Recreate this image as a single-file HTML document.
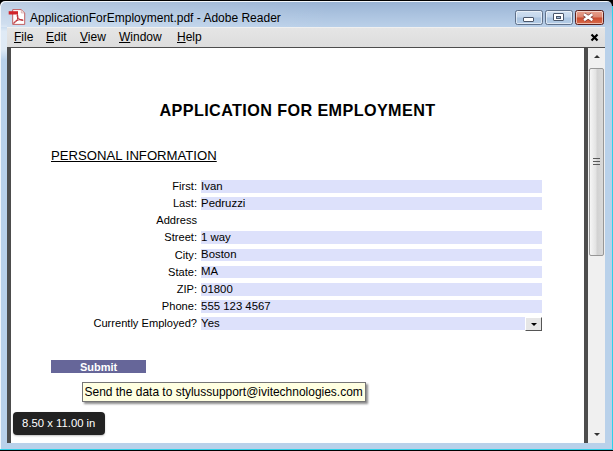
<!DOCTYPE html>
<html><head><meta charset="utf-8">
<style>
html,body{margin:0;padding:0;}
body{width:613px;height:451px;position:relative;overflow:hidden;background:#000;font-family:"Liberation Sans",sans-serif;}
.abs{position:absolute;}
#frame{left:0;top:1.3px;width:612px;height:447.7px;border-radius:5px 5px 0 0;background:linear-gradient(90deg,rgba(255,255,255,0.35) 0px,rgba(255,255,255,0.25) 60px,rgba(255,255,255,0) 330px) 0 0/612px 26px no-repeat,linear-gradient(#98b2d3 0px,#a9c1de 12px,#b9cfe8 25px,#b9d1ea 27px);box-shadow:inset 1px 1px 0 #f2f6fb;}
#cy1{left:612px;top:6px;width:1px;height:444px;background:#2fd0e8;}
#cy2{left:0;top:449px;width:613px;height:1px;background:#2fd0e8;}
#title{left:30px;top:11px;font-size:12px;line-height:14px;color:#000;white-space:nowrap;}
#menubar{left:7px;top:27px;width:598px;height:20px;background:linear-gradient(#e5e5e5,#dddddd);border-top:1px solid #f0f0f0;box-sizing:border-box;}
.mi{position:absolute;top:30px;font-size:12px;line-height:14px;color:#000;}
#content{left:7px;top:47px;width:598px;height:396px;background:#4d4d4d;}
#page{left:11px;top:48px;width:573px;height:395px;background:#fff;}
#sb{left:588px;top:48px;width:17px;height:395px;background:#f0f0f0;}
#thumb{left:588.800px;top:68.300px;width:15.200px;height:187.400px;border:1px solid #979797;border-radius:2px;box-sizing:border-box;background:linear-gradient(90deg,#f6f6f6,#e3e3e3 45%,#d2d2d2 55%,#dadada);}
.grip{position:absolute;left:592.800px;width:6.800px;height:1.200px;background:#5a5a5a;}
h1{position:absolute;left:159.5px;white-space:nowrap;top:101px;margin:0;font-size:16.2px;letter-spacing:0.39px;font-weight:bold;color:#000;}
#pi{left:51px;top:147.6px;font-size:13.15px;text-decoration:underline;color:#000;}
.lab{position:absolute;right:416px;font-size:11.1px;color:#000;white-space:nowrap;}
.fld{position:absolute;left:200.6px;width:341.4px;height:12.7px;background:#dde1fb;}
.val{position:absolute;left:201.1px;font-size:11.38px;margin-top:-0.3px;color:#000;white-space:nowrap;}
#dd{left:525px;top:317px;width:17px;height:13.5px;box-sizing:border-box;background:#e6e6e6;border-top:1px solid #fff;border-left:1px solid #fff;border-right:1px solid #555;border-bottom:1px solid #555;}
#dda{left:531px;top:323px;width:0;height:0;border-left:3px solid transparent;border-right:3px solid transparent;border-top:3px solid #000;}
#submit{left:51.3px;top:359.8px;width:94.5px;height:13.3px;background:#666699;color:#fff;font-size:11px;font-weight:bold;text-align:center;line-height:15px;}
#tip{left:82px;top:382.2px;width:283.6px;height:20px;box-sizing:border-box;border:1px solid #767676;background:#ffffe1;font-size:11.97px;line-height:19.6px;padding-left:1.5px;color:#000;white-space:nowrap;box-shadow:2px 2px 2px rgba(0,0,0,0.45);}
#size{left:12.5px;top:412px;width:92.5px;height:22.5px;border-radius:4px;background:#222;color:#fff;font-size:11.3px;line-height:23.5px;text-align:center;box-shadow:0 1px 2px rgba(0,0,0,0.25);}
.wb{position:absolute;top:10px;height:15px;box-sizing:border-box;border:1px solid #5f7089;border-radius:2.500px;box-shadow:inset 0 0 0 1px rgba(255,255,255,0.55);}
</style></head><body>
<div id="frame" class="abs"></div>
<div class="abs" style="left:1px;top:24px;width:6px;height:36px;background:linear-gradient(rgba(255,255,255,0),rgba(255,255,255,0.55) 20%,rgba(255,255,255,0.55) 70%,rgba(255,255,255,0))"></div>
<div id="cy1" class="abs"></div>
<div id="cy2" class="abs"></div>
<svg class="abs" style="left:8px;top:8px" width="18" height="18" viewBox="0 0 18 18">
<path d="M4.700 1.600h8.600l3.400 3.400v11.400h-12z" fill="#fff" stroke="#b83a3a" stroke-width="0.800"/>
<path d="M13.300 1.600v3.400h3.400z" fill="#f3e6e6" stroke="#c98080" stroke-width="0.500"/>
<rect x="0.700" y="3.200" width="9.300" height="3.300" fill="#d2232a"/>
<path d="M9.500 6.600c0.800 2.500 0.200 4.300-0.900 6.200c-0.800 1.300-2 2.300-3 2.500c0.400-1.400 2.300-2.700 4.600-3.300c2-0.500 3.700-0.400 5 0.200c-1.600 0.500-4.200-0.800-5.400-2.600c-0.700-1-0.800-2.100-0.300-3z" fill="none" stroke="#b8232a" stroke-width="1"/>
</svg>
<div id="title" class="abs">ApplicationForEmployment.pdf - Adobe Reader</div>
<div class="wb" style="left:515px;width:28px;background:linear-gradient(#cfdff0 0%,#c3d6ec 48%,#aac4e0 52%,#b4cce6 100%)"></div>
<div class="abs" style="left:522.700px;top:17px;width:11.300px;height:4.500px;box-sizing:border-box;background:#fff;border:1px solid #4a566a;border-radius:1px"></div>
<div class="wb" style="left:545px;width:28px;background:linear-gradient(#cfdff0 0%,#c3d6ec 48%,#aac4e0 52%,#b4cce6 100%)"></div>
<div class="abs" style="left:553px;top:13.300px;width:11px;height:8px;box-sizing:border-box;background:#fff;border:1px solid #4a566a;border-radius:1px"></div>
<div class="abs" style="left:556px;top:16px;width:5px;height:3px;box-sizing:border-box;background:#9fb8d6;border:1px solid #4a566a;"></div>
<div class="wb" style="left:575px;width:29px;border-color:#5a1f1c;background:linear-gradient(#e8a08c 0%,#dc8670 48%,#cb4a2d 52%,#d86c4c 100%)"></div>
<svg class="abs" style="left:581.600px;top:12px" width="13" height="11" viewBox="0 0 13 11"><path d="M2 2.300L10.400 8.100M10.400 2.300L2 8.100" stroke="#6a3030" stroke-opacity="0.85" stroke-width="3.900" stroke-linecap="butt"/><path d="M2 2.300L10.400 8.100M10.400 2.300L2 8.100" stroke="#fff" stroke-width="2.500" stroke-linecap="butt"/></svg>
<div id="menubar" class="abs"></div>
<div class="mi" style="left:14px"><u>F</u>ile</div>
<div class="mi" style="left:46px"><u>E</u>dit</div>
<div class="mi" style="left:80px"><u>V</u>iew</div>
<div class="mi" style="left:119px"><u>W</u>indow</div>
<div class="mi" style="left:177px"><u>H</u>elp</div>
<svg class="abs" style="left:590px;top:33px" width="9" height="9" viewBox="0 0 9 9"><path d="M1.500 1.500L7.500 7.500M7.500 1.500L1.500 7.500" stroke="#000" stroke-width="2.200"/></svg>
<div id="content" class="abs"></div>
<div id="page" class="abs"></div>
<div id="sb" class="abs"></div>
<div class="abs" style="left:593.800px;top:55px;width:0;height:0;border-left:3.500px solid transparent;border-right:3.500px solid transparent;border-bottom:3.500px solid #333;"></div>
<div class="abs" style="left:593.500px;top:433px;width:0;height:0;border-left:3.500px solid transparent;border-right:3.500px solid transparent;border-top:3.800px solid #333;"></div>
<div id="thumb" class="abs"></div>
<div class="grip" style="top:158px"></div><div class="grip" style="top:161px"></div><div class="grip" style="top:164px"></div>
<h1>APPLICATION FOR EMPLOYMENT</h1>
<div id="pi" class="abs">PERSONAL INFORMATION</div>
<div class="fld" style="top:180.00px"></div>
<div class="lab" style="top:180.00px">First:</div>
<div class="val" style="top:180.00px">Ivan</div>
<div class="fld" style="top:197.15px"></div>
<div class="lab" style="top:197.15px">Last:</div>
<div class="val" style="top:197.15px">Pedruzzi</div>
<div class="lab" style="top:214.30px">Address</div>
<div class="fld" style="top:231.45px"></div>
<div class="lab" style="top:231.45px">Street:</div>
<div class="val" style="top:231.45px">1 way</div>
<div class="fld" style="top:248.60px"></div>
<div class="lab" style="top:248.60px">City:</div>
<div class="val" style="top:248.60px">Boston</div>
<div class="fld" style="top:265.75px"></div>
<div class="lab" style="top:265.75px">State:</div>
<div class="val" style="top:265.75px">MA</div>
<div class="fld" style="top:282.90px"></div>
<div class="lab" style="top:282.90px">ZIP:</div>
<div class="val" style="top:282.90px">01800</div>
<div class="fld" style="top:300.05px"></div>
<div class="lab" style="top:300.05px">Phone:</div>
<div class="val" style="top:300.05px">555 123 4567</div>
<div class="fld" style="top:317.20px;width:324.4px"></div>
<div class="lab" style="top:317.20px">Currently Employed?</div>
<div class="val" style="top:317.20px">Yes</div>
<div id="dd" class="abs"></div><div id="dda" class="abs"></div>
<div id="submit" class="abs">Submit</div>
<div id="tip" class="abs">Send the data to stylussupport@ivitechnologies.com</div>
<div id="size" class="abs">8.50 x 11.00 in</div>
</body></html>
